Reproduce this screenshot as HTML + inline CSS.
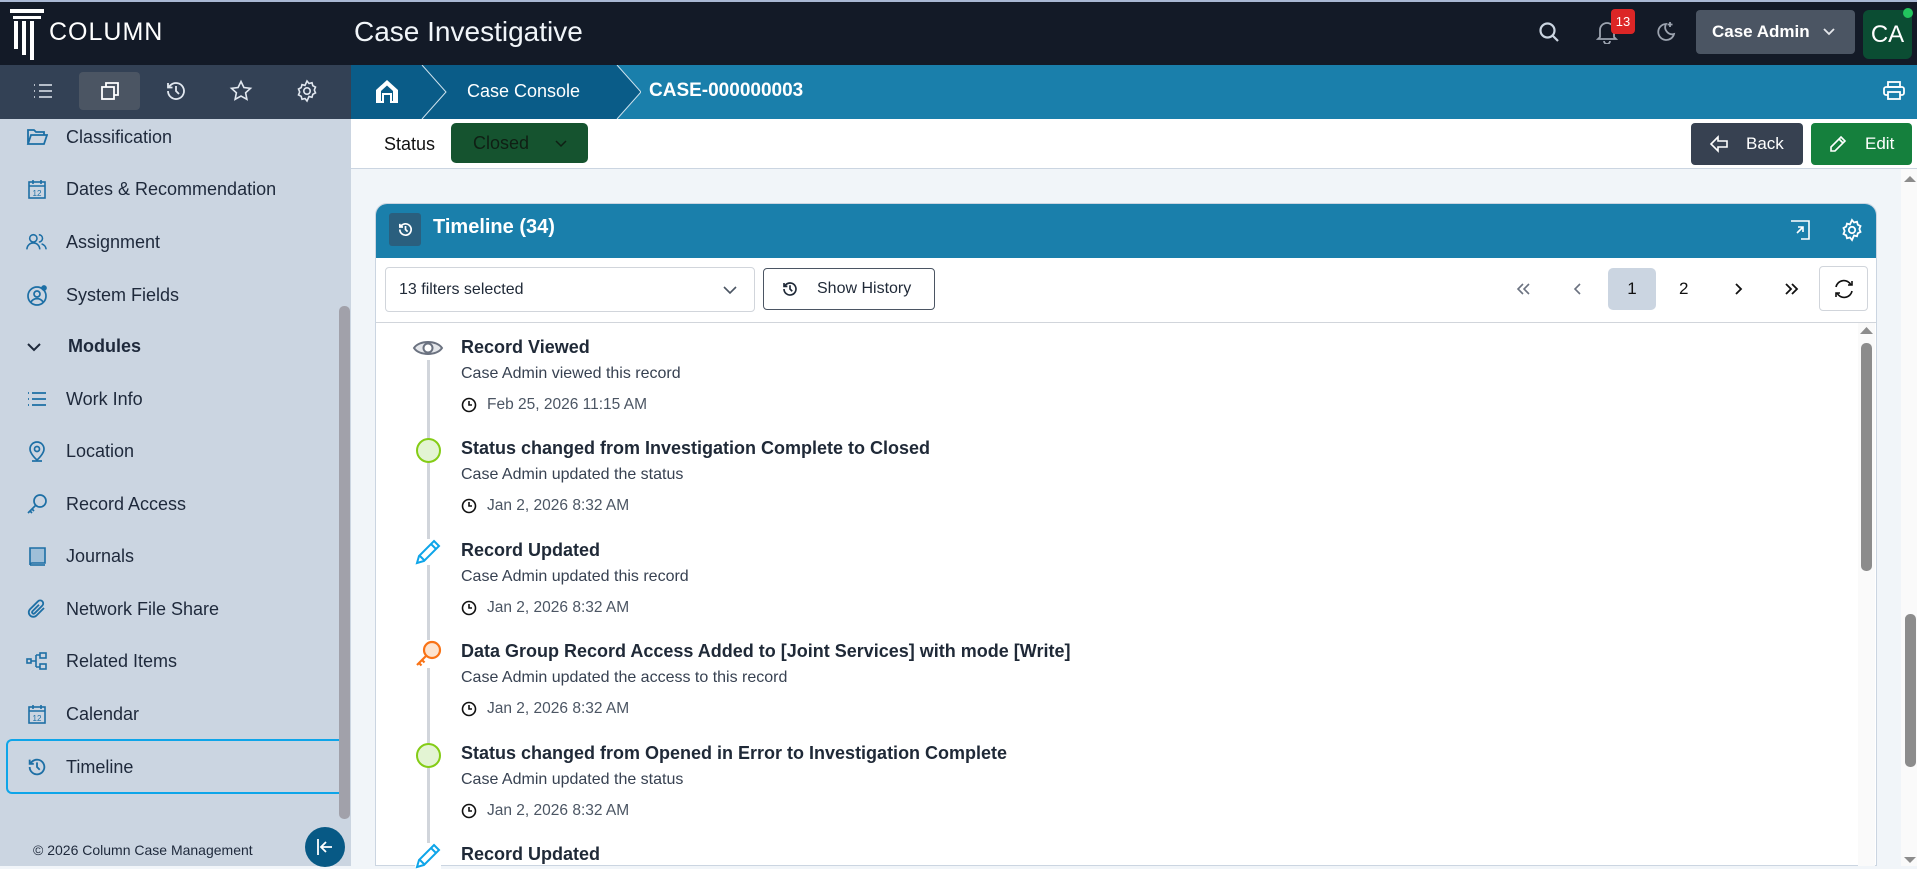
<!DOCTYPE html>
<html><head><meta charset="utf-8"><style>
*{box-sizing:border-box;margin:0;padding:0}
body{width:1917px;height:866px;overflow:hidden;position:relative;font-family:"Liberation Sans",sans-serif;background:#f1f5f9;color:#1e293b}
.a{position:absolute}
svg{display:block}
.nav{position:absolute;left:26px;display:flex;align-items:center;font-size:18px;color:#1e293b;height:30px}
.nav svg{width:22px;height:22px;margin-right:18px}
.ti{position:absolute;left:412px}
.tt{position:absolute;left:461px;font-size:18px;font-weight:bold;color:#1f2937;white-space:nowrap}
.td{position:absolute;left:461px;font-size:16px;color:#374151;white-space:nowrap}
.tdt{position:absolute;left:461px;font-size:15.5px;color:#4b5563;display:flex;align-items:center;white-space:nowrap}
.tdt svg{margin-right:10px}
</style></head><body>
<!-- header -->
<div class="a" style="left:0;top:0;width:1917px;height:65px;background:#131a27;border-top:2px solid #a9b8d4"></div>
<svg class="a" style="left:10px;top:6px" width="36" height="54" viewBox="0 0 36 54"><rect x="0" y="3" width="34" height="4" fill="#fff"/><rect x="3" y="10" width="28" height="3" fill="#fff"/><rect x="4" y="15" width="4" height="28" fill="#fff"/><rect x="12" y="15" width="4" height="34" fill="#fff"/><rect x="20" y="15" width="4" height="40" fill="#fff"/></svg>
<div class="a" style="left:49px;top:18px;font-size:25px;color:#fff;letter-spacing:1px">COLUMN</div>
<div class="a" style="left:354px;top:16px;font-size:28px;color:#f1f5f9">Case Investigative</div>
<svg class="a" style="left:1537px;top:20px" width="24" height="24" viewBox="0 0 24 24" fill="none" stroke="#cbd5e1" stroke-width="2.2"><circle cx="10.5" cy="10.5" r="7"/><path d="M16 16l5 5"/></svg>
<svg class="a" style="left:1596px;top:20px" width="22" height="24" viewBox="0 0 22 24" fill="none" stroke="#9ca3af" stroke-width="1.8"><path d="M4 17V10a7 7 0 0114 0v7l2 2H2z"/><path d="M8 21a3 3 0 006 0"/></svg>
<div class="a" style="left:1611px;top:9px;width:24px;height:25px;background:#dc2626;border-radius:4px;color:#fff;font-size:13px;text-align:center;line-height:25px">13</div>
<svg class="a" style="left:1652px;top:20px" width="24" height="24" viewBox="0 0 24 24" fill="none" stroke="#9ca3af" stroke-width="1.8"><path d="M14 4a8 8 0 108 10A7 7 0 0114 4z"/><path d="M18 2v5M15.5 4.5h5"/></svg>
<div class="a" style="left:1696px;top:10px;width:159px;height:44px;background:#4b5563;border-radius:4px;color:#fff;font-size:17px;line-height:44px;padding-left:16px;font-weight:bold">Case Admin<svg class="a" style="left:126px;top:17px" width="14" height="10" viewBox="0 0 14 10" fill="none" stroke="#e5e7eb" stroke-width="1.8"><path d="M2 2l5 5 5-5"/></svg></div>
<div class="a" style="left:1863px;top:10px;width:49px;height:49px;background:#0b4d33;border-radius:6px;color:#fff;font-size:24px;text-align:center;line-height:49px">CA</div>
<div class="a" style="left:1903px;top:8px;width:10px;height:10px;background:#22c55e;border-radius:50%"></div>
<!-- sidebar -->
<div class="a" style="left:0;top:65px;width:351px;height:54px;background:#334155"></div>
<div class="a" style="left:79px;top:72px;width:61px;height:38px;background:#4b5563;border-radius:4px"></div>
<svg class="a" style="left:32px;top:81px" width="22" height="20" viewBox="0 0 22 20" fill="none" stroke="#e2e8f0" stroke-width="1.6"><path d="M7 4h13M7 10h13M7 16h13M2 4h1M2 10h1M2 16h1"/></svg>
<svg class="a" style="left:99px;top:80px" width="22" height="22" viewBox="0 0 22 22" fill="none" stroke="#fff" stroke-width="1.8"><rect x="3" y="7" width="12" height="12"/><path d="M7 7V3h12v12h-4"/></svg>
<svg class="a" style="left:164px;top:79px" width="24" height="24" viewBox="0 0 24 24" fill="none" stroke="#e2e8f0" stroke-width="1.8"><path d="M4 12a8 8 0 102.5-5.8L4 8.5M4 4v4.5h4.5"/><path d="M12 7v5l3 3"/></svg>
<svg class="a" style="left:229px;top:79px" width="24" height="24" viewBox="0 0 24 24" fill="none" stroke="#e2e8f0" stroke-width="1.6"><path d="M12 2.5l2.9 6 6.6.8-4.9 4.5 1.3 6.5L12 17l-5.9 3.3 1.3-6.5-4.9-4.5 6.6-.8z"/></svg>
<svg class="a" style="left:295px;top:79px" width="24" height="24" viewBox="0 0 24 24" fill="none" stroke="#e2e8f0" stroke-width="1.6"><circle cx="12" cy="12" r="3.2"/><path d="M12 2l2 2.5 3-.8.8 3 2.7 1.4-1.2 2.9 1.2 2.9-2.7 1.4-.8 3-3-.8L12 22l-2-2.5-3 .8-.8-3-2.7-1.4L4.7 13 3.5 10l2.7-1.4.8-3 3 .8z"/></svg>
<div class="a" style="left:0;top:119px;width:351px;height:747px;background:#cbd5e1"></div>
<div class="a" style="left:6px;top:739px;width:334px;height:55px;border:2px solid #0ea5e9;border-right:none;border-radius:6px 0 0 6px"></div>
<div class="a" style="left:339px;top:306px;width:11px;height:513px;background:#a1a1aa;border-radius:5px"></div>
<div class="nav" style="top:122px"><svg viewBox="0 0 22 22" fill="none" stroke="#1d6fa5" stroke-width="1.8"><path d="M2 18V4h6l2 2h8v3M2 18l3-9h16l-3 9z"/></svg>Classification</div>
<div class="nav" style="top:174px"><svg viewBox="0 0 22 22" fill="none" stroke="#1d6fa5" stroke-width="1.6"><rect x="3" y="4" width="16" height="16"/><path d="M3 8h16M7 2v4M15 2v4"/><text x="11" y="18" font-size="8" fill="#1d6fa5" stroke="none" text-anchor="middle" font-family="Liberation Sans">12</text></svg>Dates &amp; Recommendation</div>
<div class="nav" style="top:227px"><svg viewBox="0 0 24 22" fill="none" stroke="#1d6fa5" stroke-width="1.7"><circle cx="8" cy="7" r="4"/><path d="M1 19a7 7 0 0114 0M14 3a4 4 0 010 8M17 13a7 7 0 015 6"/></svg>Assignment</div>
<div class="nav" style="top:280px"><svg viewBox="0 0 22 22" fill="none" stroke="#1d6fa5" stroke-width="1.7"><circle cx="11" cy="12" r="9"/><circle cx="11" cy="10" r="3"/><path d="M5 18a7 7 0 0112 0"/><circle cx="18" cy="4" r="2" fill="#1d6fa5"/></svg>System Fields</div>
<div class="a" style="left:26px;top:336px;font-size:18px;font-weight:bold;color:#1e293b;display:flex;align-items:center"><svg width="16" height="10" viewBox="0 0 16 10" fill="none" stroke="#1e293b" stroke-width="2" style="margin-right:26px"><path d="M2 2l6 6 6-6"/></svg>Modules</div>
<div class="nav" style="top:384px"><svg viewBox="0 0 22 22" fill="none" stroke="#1d6fa5" stroke-width="1.8"><path d="M6 5h14M6 11h14M6 17h14M2 5h1M2 11h1M2 17h1"/></svg>Work Info</div>
<div class="nav" style="top:436px"><svg viewBox="0 0 22 22" fill="none" stroke="#1d6fa5" stroke-width="1.7"><path d="M11 20s-7-6-7-11a7 7 0 0114 0c0 5-7 11-7 11z"/><circle cx="11" cy="9" r="2.5"/><path d="M6 21h10"/></svg>Location</div>
<div class="nav" style="top:489px"><svg viewBox="0 0 22 22" fill="none" stroke="#1d6fa5" stroke-width="1.7"><circle cx="14" cy="8" r="6"/><path d="M10 12l-8 8M4 18l2 2M6 16l2 2"/></svg>Record Access</div>
<div class="nav" style="top:541px"><svg viewBox="0 0 22 22" fill="#9fbfd8" stroke="#1d6fa5" stroke-width="1.6"><path d="M4 3h15v15H6a2 2 0 00-2 2z"/><path d="M4 20h15" fill="none"/></svg>Journals</div>
<div class="nav" style="top:594px"><svg viewBox="0 0 22 22" fill="none" stroke="#1d6fa5" stroke-width="1.8"><path d="M18 10l-7.5 7.5a4.5 4.5 0 01-6.4-6.4L12 3.3a3 3 0 014.3 4.3l-7.8 7.8a1.5 1.5 0 01-2.1-2.1L13 6.7"/></svg>Network File Share</div>
<div class="nav" style="top:646px"><svg viewBox="0 0 22 22" fill="none" stroke="#1d6fa5" stroke-width="1.6"><rect x="1" y="9" width="4" height="4"/><rect x="14" y="3" width="6" height="5"/><rect x="14" y="14" width="6" height="5"/><path d="M5 11h5M10 5v12M10 5h4M10 17h4"/></svg>Related Items</div>
<div class="nav" style="top:699px"><svg viewBox="0 0 22 22" fill="none" stroke="#1d6fa5" stroke-width="1.6"><rect x="3" y="4" width="16" height="16"/><path d="M3 8h16M7 2v4M15 2v4"/><text x="11" y="18" font-size="8" fill="#1d6fa5" stroke="none" text-anchor="middle" font-family="Liberation Sans">12</text></svg>Calendar</div>
<div class="nav" style="top:752px"><svg viewBox="0 0 24 24" fill="none" stroke="#1d6fa5" stroke-width="2"><path d="M4 12a8 8 0 102.5-5.8L4 8.5M4 4v4.5h4.5"/><path d="M12 7v5l3 3"/></svg>Timeline</div>
<div class="a" style="left:33px;top:842px;font-size:14px;color:#1e293b">© 2026 Column Case Management</div>
<div class="a" style="left:305px;top:827px;width:40px;height:40px;border-radius:50%;background:#075985"><svg style="margin:10px" width="20" height="20" viewBox="0 0 20 20" fill="none" stroke="#fff" stroke-width="1.8"><path d="M3 2v16M17 10H7M11 5l-5 5 5 5"/></svg></div>
<!-- breadcrumb -->
<div class="a" style="left:351px;top:65px;width:1566px;height:54px;background:#1a7fab"></div>
<svg class="a" style="left:351px;top:65px" width="290" height="54" viewBox="0 0 290 54"><path d="M0 0h266l24 27-24 27H0z" fill="#0a5c88"/><path d="M71 0l24 27-24 27" fill="none" stroke="#cfe3ee" stroke-width="1"/><path d="M266 0l24 27-24 27" fill="none" stroke="#cfe3ee" stroke-width="1"/></svg>
<svg class="a" style="left:373px;top:77px" width="28" height="28" viewBox="0 0 28 28" fill="#fff"><path d="M14 3L3 13v13h8v-8h6v8h8V13z"/><path d="M8 14l6-5.5 6 5.5v10h-1v-8h-10v8H8z" fill="#0a5c88"/></svg>
<div class="a" style="left:467px;top:81px;font-size:18px;color:#fff">Case Console</div>
<div class="a" style="left:649px;top:80px;font-size:19px;font-weight:bold;color:#fff">CASE-000000003</div>
<svg class="a" style="left:1883px;top:81px" width="22" height="20" viewBox="0 0 22 20" fill="none" stroke="#fff" stroke-width="1.8"><rect x="5" y="1" width="12" height="5"/><rect x="1" y="6" width="20" height="8" rx="2"/><rect x="5" y="11" width="12" height="7" fill="#1a7fab"/></svg>
<!-- status row -->
<div class="a" style="left:351px;top:119px;width:1566px;height:50px;background:#fff;border-bottom:1px solid #cbd5e1"></div>
<div class="a" style="left:384px;top:134px;font-size:18px;color:#111">Status</div>
<div class="a" style="left:451px;top:123px;width:137px;height:40px;background:#15532f;border-radius:5px;color:#0f1f14;font-size:18px;line-height:40px;padding-left:22px">Closed<svg class="a" style="left:103px;top:16px" width="14" height="9" viewBox="0 0 14 9" fill="none" stroke="#0f1f14" stroke-width="1.5"><path d="M2 2l5 5 5-5"/></svg></div>
<div class="a" style="left:1691px;top:123px;width:112px;height:42px;background:#374151;border-radius:4px;color:#fff;font-size:17px;line-height:42px;padding-left:55px">Back<svg class="a" style="left:18px;top:12px" width="20" height="18" viewBox="0 0 20 18" fill="none" stroke="#fff" stroke-width="1.6"><path d="M9 2L2 9l7 7v-4h9V6H9z"/></svg></div>
<div class="a" style="left:1811px;top:123px;width:101px;height:42px;background:#15803d;border-radius:4px;color:#fff;font-size:17px;line-height:42px;padding-left:54px">Edit<svg class="a" style="left:18px;top:12px" width="18" height="18" viewBox="0 0 18 18" fill="none" stroke="#fff" stroke-width="1.6"><path d="M12 2l4 4-10 10H2v-4zM10 4l4 4"/></svg></div>
<!-- page scrollbar -->
<div class="a" style="left:1901px;top:169px;width:16px;height:697px;background:#fafafa"></div>
<svg class="a" style="left:1904px;top:175px" width="12" height="8"><path d="M0 7l6-6 6 6z" fill="#8c8c8c"/></svg>
<div class="a" style="left:1905px;top:614px;width:11px;height:153px;background:#8c8c8c;border-radius:5px"></div>
<svg class="a" style="left:1904px;top:856px" width="12" height="8"><path d="M0 1l6 6 6-6z" fill="#8c8c8c"/></svg>
<!-- card -->
<div class="a" style="left:375px;top:203px;width:1502px;height:663px;background:#fff;border:1px solid #cbd5e1;border-radius:12px 12px 0 0;overflow:hidden">
 <div class="a" style="left:0;top:0;width:1502px;height:54px;background:#1a7fab"></div>
 <div class="a" style="left:0;top:54px;width:1502px;height:65px;border-bottom:1px solid #d1d5db"></div>
</div>
<div class="a" style="left:389px;top:213px;width:32px;height:33px;background:#2a5f7e;border-radius:3px"><svg style="margin:8px" width="17" height="17" viewBox="0 0 24 24" fill="none" stroke="#fff" stroke-width="2.4"><path d="M4 12a8 8 0 102.5-5.8L4 8.5M4 4v4.5h4.5"/><path d="M12 7v5l3 3"/></svg></div>
<div class="a" style="left:433px;top:216px;font-size:20px;font-weight:bold;color:#fff">Timeline (34)</div>
<svg class="a" style="left:1789px;top:219px" width="22" height="22" viewBox="0 0 22 22" fill="none" stroke="#fff" stroke-width="1.6"><path d="M2 2h18v18h-8M8 14l6-6M9 8h5v5"/></svg>
<svg class="a" style="left:1840px;top:218px" width="24" height="24" viewBox="0 0 24 24" fill="none" stroke="#fff" stroke-width="1.8"><circle cx="12" cy="12" r="3.2"/><path d="M12 2l2 2.5 3-.8.8 3 2.7 1.4-1.2 2.9 1.2 2.9-2.7 1.4-.8 3-3-.8L12 22l-2-2.5-3 .8-.8-3-2.7-1.4L4.7 13 3.5 10l2.7-1.4.8-3 3 .8z"/></svg>
<div class="a" style="left:385px;top:267px;width:370px;height:45px;border:1px solid #d1d5db;border-radius:4px;font-size:16px;color:#1f2937;line-height:43px;padding-left:13px">13 filters selected<svg class="a" style="left:336px;top:17px" width="16" height="10" viewBox="0 0 16 10" fill="none" stroke="#4b5563" stroke-width="1.6"><path d="M2 2l6 6 6-6"/></svg></div>
<div class="a" style="left:763px;top:268px;width:172px;height:42px;border:1px solid #4b5563;border-radius:4px;font-size:16px;color:#1f2937;line-height:40px;padding-left:53px">Show History<svg class="a" style="left:17px;top:11px" width="18" height="18" viewBox="0 0 24 24" fill="none" stroke="#1f2937" stroke-width="2.2"><path d="M4 12a8 8 0 102.5-5.8L4 8.5M4 4v4.5h4.5"/><path d="M12 7v5l3 3"/></svg></div>
<svg class="a" style="left:1516px;top:282px" width="16" height="14" viewBox="0 0 16 14" fill="none" stroke="#6b7280" stroke-width="1.6"><path d="M7 2L2 7l5 5M13 2L8 7l5 5"/></svg>
<svg class="a" style="left:1573px;top:282px" width="10" height="14" viewBox="0 0 10 14" fill="none" stroke="#6b7280" stroke-width="1.6"><path d="M7 2L2 7l5 5"/></svg>
<div class="a" style="left:1608px;top:268px;width:48px;height:42px;background:#cbd5e1;border-radius:5px;font-size:17px;text-align:center;line-height:42px;color:#111">1</div>
<div class="a" style="left:1679px;top:279px;font-size:17px;color:#111">2</div>
<svg class="a" style="left:1733px;top:282px" width="10" height="14" viewBox="0 0 10 14" fill="none" stroke="#111" stroke-width="1.8"><path d="M3 2l5 5-5 5"/></svg>
<svg class="a" style="left:1783px;top:282px" width="16" height="14" viewBox="0 0 16 14" fill="none" stroke="#111" stroke-width="1.8"><path d="M3 2l5 5-5 5M9 2l5 5-5 5"/></svg>
<div class="a" style="left:1819px;top:266px;width:49px;height:45px;border:1px solid #d1d5db;border-radius:4px"><svg style="margin:12px 13px" width="22" height="20" viewBox="0 0 22 20" fill="none" stroke="#111" stroke-width="1.6"><path d="M3 8a8 8 0 0115-2M19 2v4h-4M19 12a8 8 0 01-15 2M3 18v-4h4"/></svg></div>
<!-- timeline list -->
<div class="a" style="left:1858px;top:323px;width:17px;height:543px;background:#fafafa"></div>
<svg class="a" style="left:1860px;top:326px" width="13" height="9"><path d="M0 8l6.5-7 6.5 7z" fill="#8c8c8c"/></svg>
<div class="a" style="left:1861px;top:343px;width:11px;height:228px;background:#8c8c8c;border-radius:5px"></div>
<div class="a" style="left:427px;top:360px;width:3px;height:506px;background:#d1d5db"></div>

<svg class="ti" style="top:337px;background:#fff" width="32" height="22" viewBox="0 0 32 22" fill="#e5e7eb" stroke="#6b7280" stroke-width="2"><path d="M2 11C7 3 25 3 30 11 25 19 7 19 2 11z"/><circle cx="16" cy="11" r="4.5" fill="#fff"/></svg>
<div class="tt" style="top:337px">Record Viewed</div>
<div class="td" style="top:365px">Case Admin viewed this record</div>
<div class="tdt" style="top:396px"><svg width="16" height="16" viewBox="0 0 16 16" fill="none" stroke="#111" stroke-width="1.6"><circle cx="8" cy="8" r="6.5"/><path d="M8 4v4h3"/></svg>Feb 25, 2026 11:15 AM</div>

<div class="a" style="left:416px;top:438px;width:25px;height:25px;border-radius:50%;background:#e3f4d3;border:2px solid #84cc16"></div>
<div class="tt" style="top:438px">Status changed from Investigation Complete to Closed</div>
<div class="td" style="top:466px">Case Admin updated the status</div>
<div class="tdt" style="top:497px"><svg width="16" height="16" viewBox="0 0 16 16" fill="none" stroke="#111" stroke-width="1.6"><circle cx="8" cy="8" r="6.5"/><path d="M8 4v4h3"/></svg>Jan 2, 2026 8:32 AM</div>

<svg class="ti" style="top:539px;left:415px;background:#fff" width="26" height="26" viewBox="0 0 26 26" fill="none" stroke="#0ea5e9" stroke-width="2"><path d="M19 2l5 5L9 22l-7 2 2-7zM16 5l5 5M5 17l4 4"/></svg>
<div class="tt" style="top:540px">Record Updated</div>
<div class="td" style="top:568px">Case Admin updated this record</div>
<div class="tdt" style="top:599px"><svg width="16" height="16" viewBox="0 0 16 16" fill="none" stroke="#111" stroke-width="1.6"><circle cx="8" cy="8" r="6.5"/><path d="M8 4v4h3"/></svg>Jan 2, 2026 8:32 AM</div>

<svg class="ti" style="top:640px;left:414px;background:#fff" width="28" height="28" viewBox="0 0 28 28" fill="#fde4cf" stroke="#f97316" stroke-width="2.2"><circle cx="18" cy="10" r="8"/><path d="M13 15L3 25M5 23l2.5 2.5M8 20l2.5 2.5" fill="none"/></svg>
<div class="tt" style="top:641px">Data Group Record Access Added to [Joint Services] with mode [Write]</div>
<div class="td" style="top:669px">Case Admin updated the access to this record</div>
<div class="tdt" style="top:700px"><svg width="16" height="16" viewBox="0 0 16 16" fill="none" stroke="#111" stroke-width="1.6"><circle cx="8" cy="8" r="6.5"/><path d="M8 4v4h3"/></svg>Jan 2, 2026 8:32 AM</div>

<div class="a" style="left:416px;top:743px;width:25px;height:25px;border-radius:50%;background:#e3f4d3;border:2px solid #84cc16"></div>
<div class="tt" style="top:743px">Status changed from Opened in Error to Investigation Complete</div>
<div class="td" style="top:771px">Case Admin updated the status</div>
<div class="tdt" style="top:802px"><svg width="16" height="16" viewBox="0 0 16 16" fill="none" stroke="#111" stroke-width="1.6"><circle cx="8" cy="8" r="6.5"/><path d="M8 4v4h3"/></svg>Jan 2, 2026 8:32 AM</div>

<svg class="ti" style="top:843px;left:415px;background:#fff" width="26" height="26" viewBox="0 0 26 26" fill="none" stroke="#0ea5e9" stroke-width="2"><path d="M19 2l5 5L9 22l-7 2 2-7zM16 5l5 5M5 17l4 4"/></svg>
<div class="tt" style="top:844px">Record Updated</div>
</body></html>
